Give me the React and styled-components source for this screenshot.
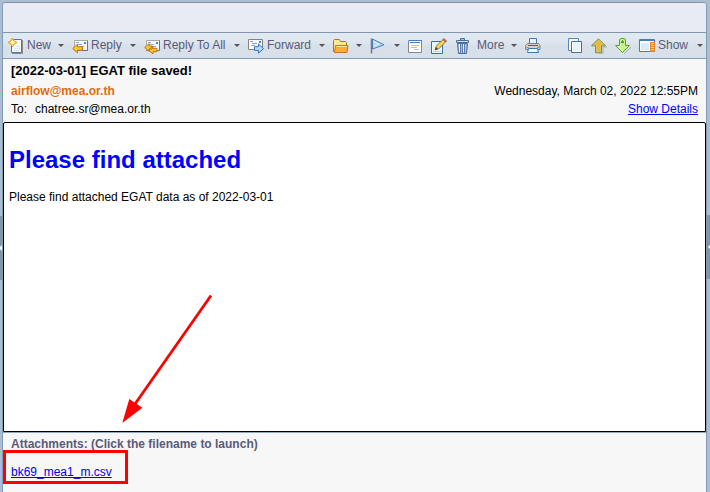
import React from "react";
import styled, { createGlobalStyle } from "styled-components";

const GlobalStyle = createGlobalStyle`
  * { box-sizing: border-box; }
  body {
    margin: 0;
    overflow: hidden;
    background: #adbdd1;
    font-family: "Liberation Sans", Arial, sans-serif;
    font-size: 12px;
    color: #000;
  }
`;

const Page = styled.div`
  display: grid;
  grid-template-columns: 2px 705px 3px;
  width: 710px;
  height: 492px;
  padding-top: 2px;
  overflow: hidden;
`;

const Gutter = styled.div`
  padding-top: ${(p) => p.$top}px;
`;

const Splitter = styled.div`
  display: flex;
  align-items: center;
  justify-content: ${(p) => p.$align};
  height: 64px;
  background: #8594a9;
`;

const Panel = styled.main`
  display: flex;
  flex-direction: column;
  width: 705px;
  height: 490px;
  border: 1px solid #7f9bb8;
  border-top-color: #8592aa;
  border-bottom: 0;
  border-radius: 4px 4px 0 0;
  background: #f7f7f7;
  overflow: hidden;
`;

const TitleStrip = styled.div`
  flex: 0 0 29px;
  background: #e8ebf3;
`;

const Toolbar = styled.div`
  display: grid;
  grid-template-columns:
    64px 72px 104px 85px 37px 38px 23px 24px 21px
    49px 43px 23px 24px 24px 72px;
  flex: 0 0 27px;
  padding-left: 5px;
  border-top: 1px solid #8395ad;
  border-bottom: 1px solid #7f9fc0;
  background: linear-gradient(#e1e9f0 0 5px, #dde4ed 10px, #d7e0e8 13px, #d8e1e9);
`;

const Tool = styled.div`
  display: flex;
  align-items: center;
  padding-right: ${(p) => p.$end ?? 8}px;
  color: #5a5a7a;
  white-space: nowrap;
`;

const Icon = styled.svg`
  flex: none;
  width: 16px;
  height: 16px;
  margin-top: 1px;
`;

const ToolLabel = styled.span`
  margin-left: ${(p) => p.$left ?? 3}px;
  line-height: 15px;
`;

const Caret = styled.i`
  width: 0;
  height: 0;
  margin-left: auto;
  border: 3px solid transparent;
  border-top-color: #5b5150;
  border-bottom: 0;
`;

const MailHeader = styled.header`
  display: grid;
  grid-template-rows: 24px 18px 21px;
  flex: 0 0 63px;
  padding: 0 8px;
`;

const HeaderRow = styled.div`
  display: flex;
  justify-content: space-between;
  line-height: ${(p) => p.$line}px;
`;

const Subject = styled.strong`
  font-size: 13px;
`;

const Sender = styled.strong`
  color: #e26b0b;
`;

const Recipient = styled.span`
  display: flex;
  gap: 8px;
`;

const Link = styled.a`
  color: #0000f5;
  text-decoration: underline;
`;

const Message = styled.section`
  flex: 0 0 310px;
  padding: 20px 5px;
  border: 1px solid #000;
  background: #fff;
  border-radius: 2px 2px 0 0;
`;

const Heading = styled.h1`
  margin: 3px 0 17px;
  color: #0000ff;
  font-size: 24px;
  line-height: 27px;
`;

const Copy = styled.p`
  margin: 0;
  line-height: 14px;
`;

const Attachments = styled.footer`
  flex: 1;
  padding: 3px 8px;
  border-top: 1px solid #93aabd;
`;

const AttachmentTitle = styled.div`
  color: #5a5a7a;
  font-weight: bold;
  line-height: 16px;
`;

const FileLine = styled.div`
  margin-top: 12px;
  line-height: 16px;
`;

const Highlight = styled.div`
  position: absolute;
  left: 3px;
  top: 450px;
  width: 125px;
  height: 34px;
  border: 3px solid #ff0000;
`;

const Pointer = styled.svg`
  position: absolute;
  left: 110px;
  top: 280px;
  width: 120px;
  height: 150px;
`;

const Envelope = () => (
  <>
    <path d="M2.5 2.5h13v10h-13z" fill="#f8fafc" stroke="#a9a9a5" />
    <path d="M2.5 12.5h13v-10" fill="none" stroke="#77746f" />
    <path d="M12 4h2v2h-2z" fill="#4b83cf" />
    <path d="M4 4.5h3M5 6.5h5M7 8.5h5" stroke="#8ca9ce" />
  </>
);

const ICONS = {
  new: (
    <>
      <path d="M3.5 1.5h10v13h-10z" fill="#f4f9ff" stroke="#4c78ad" />
      <path d="M14.5 2v13.5H4" fill="none" stroke="#8c8984" />
      <path d="M6 12.5h6M7 10.5h5M9 8.5h3" stroke="#c5dcf5" strokeDasharray="1 1" />
      <path d="M4.5 0 6 3l3 1.5L6 6 4.5 9 3 6 0 4.5 3 3z" fill="#fff6ad" stroke="#e59a16" />
    </>
  ),
  reply: (
    <>
      <Envelope />
      <path d="M.7 10.5 5.5 6.2v2.6h5v3.4h-5v2.6z" fill="#ffc933" stroke="#c6711b" />
    </>
  ),
  replyAll: (
    <>
      <Envelope />
      <path d="M.7 9.5 5.2 5.6V8h3v3h-3v2.5zM4.5 12 9 8v2.3h4v3.4H9V16z" fill="#ffc933" stroke="#c6711b" />
    </>
  ),
  forward: (
    <>
      <path d="M.5 1.5h14v10H.5z" fill="#f8fafc" stroke="#85827e" />
      <path d="M11 3h2v2h-2z" fill="#4b83cf" />
      <path d="M2 3.5h3M4 5.5h5M3 7.5h4" stroke="#8ca9ce" />
      <path d="M6.5 8.7h4V5.9l5 4.8-5 4.5v-2.8h-4z" fill="#b4daff" stroke="#3b74b8" />
    </>
  ),
  folder: (
    <>
      <path d="M.5 13.5v-11l1-1h5l1 2h5l1 1v10H1.5z" fill="#ffe69b" stroke="#c46c16" />
      <path d="M2.5 7.5h12.5l-1 7H1.5z" fill="#f5b137" stroke="#cc7621" />
      <path d="M3.5 8.5h10" stroke="#ffe7a0" />
    </>
  ),
  flag: (
    <>
      <path d="M1.5.5v15" stroke="#82756d" strokeWidth="1.5" />
      <path d="M2.5 1 14 6.8 2.5 11z" fill="#b7d5f7" stroke="#4d80bc" />
      <path d="M4 3.5 9 6l-5 2" fill="none" stroke="#e8f5ff" />
    </>
  ),
  window: (
    <>
      <path d="M.5 2.5h13v12H.5z" fill="#fcfcfc" stroke="#7d8998" />
      <path d="M1 2.5h13M2 4.5h10" stroke="#477dbb" />
      <path d="M3 7.5h8M3 9.5h6M6 11.5h5" stroke="#b3c3d6" />
    </>
  ),
  edit: (
    <>
      <path d="M.5 3.5h11v12H.5z" fill="#edf6ff" stroke="#3971ae" />
      <path d="M2 13.5h8" stroke="#bed5ec" />
      <path d="m4 12 1.3-4L12 1.5l2.5 2.3-6.7 7z" fill="#ffd34f" stroke="#8a7640" />
      <path d="m12 1.5 1-1L15.5 3l-1 1z" fill="#ec856c" stroke="#9a5a42" />
      <path d="m4 12 1-3 2 2z" fill="#453f39" />
    </>
  ),
  trash: (
    <>
      <path d="M5.5 2V.5h4V2M2.5 5.5h10l-1 10h-8z" fill="#a9bed7" stroke="#496d9c" />
      <path d="M1.5 2.5h12v2h-12z" fill="#d3e1ef" stroke="#496d9c" />
      <path d="M5.5 6v9M7.5 6v9M9.5 6v9" stroke="#5e80aa" />
      <path d="M4.5 6v8M8.5 6v8" stroke="#e8f1fb" />
    </>
  ),
  print: (
    <>
      <path d="M4.5 6V.5h7V6" fill="#e7f3ff" stroke="#3d77b5" />
      <path d="M2.5 5.5h11l1.5 2v4H.7v-4z" fill="#d2d2d1" stroke="#817f7d" />
      <path d="M3 7.5h10" stroke="#625d58" />
      <path d="M1 9.5h3M12 9.5h3" stroke="#e68b47" />
      <path d="M13 8h2v1h-2z" fill="#85c947" />
      <path d="M3.5 10.5h9l1 4h-11z" fill="#f5faff" stroke="#3d77b5" />
    </>
  ),
  copy: (
    <>
      <path d="M.5.5h10v12H.5z" fill="#f8fbff" stroke="#5b85b4" />
      <path d="M3.5 3.5h10v11h-10z" fill="#e5f2ff" stroke="#3b6fa9" />
      <path d="M4.5 4.5h8v9h-8z" fill="none" stroke="#fff" />
    </>
  ),
  up: (
    <>
      <path d="M8 16h4V9h4" fill="none" stroke="#a9afaf" />
      <path d="m7.5.8 7 7h-4v7h-6v-7h-4z" fill="#bfd374" stroke="#788d49" />
      <path d="m7.5 2.5 4.5 4.6H9.3v6.5H5.7V7.1H3z" fill="#ffae37" />
    </>
  ),
  down: (
    <>
      <path d="M9 16 16 9" stroke="#a9afaf" />
      <path d="M4.5 1.5 6 .5h3l1.5 1v6h4l-7 7-7-7h4z" fill="#c7f08c" stroke="#59a52b" />
      <path d="M7.5 2 9 4v1H6V4z" fill="#38a020" />
      <path d="M5.5 6v2.5H3l4.5 4.5" fill="none" stroke="#e8ffc1" />
    </>
  ),
  show: (
    <>
      <path d="M.5 1.5h15v12H.5z" fill="#fff" stroke="#4c7baf" />
      <path d="M1 2.5h15" stroke="#477db8" />
      <path d="M2 5h8v7H2z" fill="#d9eaff" />
      <path d="M11 4h5v10h-5z" fill="#e5862d" />
      <path d="M12 5.5h3M12 7.5h3M12 9.5h3M12 11.5h3" stroke="#ffe071" />
    </>
  ),
};

const tools = [
  { icon: "new", label: "New", caret: true },
  { icon: "reply", label: "Reply", caret: true },
  { icon: "replyAll", label: "Reply To All", caret: true },
  { icon: "forward", label: "Forward", caret: true },
  { icon: "folder", caret: true },
  { icon: "flag", caret: true },
  { icon: "window" },
  { icon: "edit" },
  { icon: "trash" },
  { label: "More", caret: true, left: 1 },
  { icon: "print" },
  { icon: "copy" },
  { icon: "up" },
  { icon: "down" },
  { icon: "show", label: "Show", caret: true },
];

export default function App() {
  return (
    <>
      <GlobalStyle />
      <Page>
        <Gutter $top={214}>
          <Splitter $align="flex-start">
            <svg width="2" height="6"><path d="M0 2 2 0v6L0 4z" fill="#fff" /></svg>
          </Splitter>
        </Gutter>
        <Panel>
          <TitleStrip />
          <Toolbar>
            {tools.map((tool, index) => (
              <Tool key={index} $end={tool.icon ? 8 : 8}>
                {tool.icon && <Icon viewBox="0 0 16 16">{ICONS[tool.icon]}</Icon>}
                {tool.label && <ToolLabel $left={tool.left}>{tool.label}</ToolLabel>}
                {tool.caret && <Caret />}
              </Tool>
            ))}
          </Toolbar>
          <MailHeader>
            <HeaderRow $line={24}><Subject>[2022-03-01] EGAT file saved!</Subject></HeaderRow>
            <HeaderRow $line={17}>
              <Sender>airflow@mea.or.th</Sender>
              <span>Wednesday, March 02, 2022 12:55PM</span>
            </HeaderRow>
            <HeaderRow $line={17}>
              <Recipient><span>To:</span><span>chatree.sr@mea.or.th</span></Recipient>
              <Link>Show Details</Link>
            </HeaderRow>
          </MailHeader>
          <Message>
            <Heading>Please find attached</Heading>
            <Copy>Please find attached EGAT data as of 2022-03-01</Copy>
          </Message>
          <Attachments>
            <AttachmentTitle>Attachments: (Click the filename to launch)</AttachmentTitle>
            <FileLine><Link>bk69_mea1_m.csv</Link></FileLine>
          </Attachments>
        </Panel>
        <Gutter $top={213}>
          <Splitter $align="flex-end">
            <svg width="2" height="4"><path d="M0 2 2 0v4z" fill="#fff" /></svg>
          </Splitter>
        </Gutter>
      </Page>
      <Pointer viewBox="0 0 120 150">
        <path d="M101 15.5 25 124" stroke="#ff0000" strokeWidth="2.8" />
        <path d="m12.3 143 7-24 13 8.8z" fill="#ff0000" />
      </Pointer>
      <Highlight />
    </>
  );
}
